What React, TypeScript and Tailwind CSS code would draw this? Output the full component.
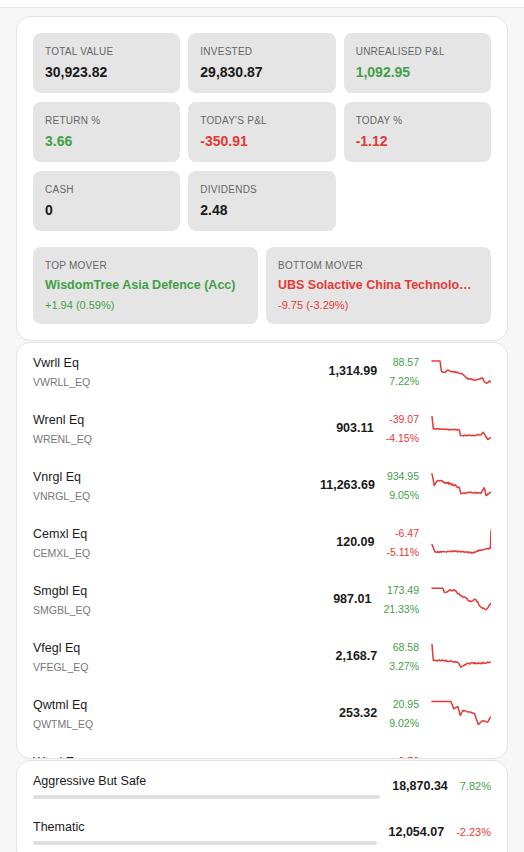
import React from 'react';

const GREEN = 'text-[#43a047]';
const RED = 'text-[#e53935]';

type Pt = [number, number, number?];

// small seeded random so the sparklines look the same on every render
function seeded(seed: number) {
  let s = seed;
  return () => {
    s = (s * 9301 + 49297) % 233280;
    return s / 233280;
  };
}

function buildPath(points: Pt[], seed: number) {
  const r = seeded(seed);
  const out: string[] = [];
  for (let i = 0; i < points.length - 1; i++) {
    const [x1, y1, j = 1.1] = points[i];
    const [x2, y2] = points[i + 1];
    const steps = Math.max(1, Math.round((x2 - x1) / 0.9));
    for (let k = 0; k < steps; k++) {
      const t = k / steps;
      const x = x1 + (x2 - x1) * t;
      const y = y1 + (y2 - y1) * t + (k === 0 ? 0 : (r() - 0.5) * j);
      out.push(`${out.length ? 'L' : 'M'}${x.toFixed(2)} ${y.toFixed(2)}`);
    }
  }
  const last = points[points.length - 1];
  out.push(`L${last[0]} ${last[1]}`);
  return out.join(' ');
}

function Sparkline({ points, seed, up }: { points: Pt[]; seed: number; up?: boolean }) {
  return (
    <svg width="60" height="28" viewBox="0 0 60 28" className="shrink-0">
      <path
        d={buildPath(points, seed)}
        fill="none"
        stroke={up ? '#43a047' : '#e53935'}
        strokeWidth="1.5"
        strokeLinejoin="round"
        strokeLinecap="round"
      />
    </svg>
  );
}

const stats = [
  { label: 'Total Value', value: '30,923.82' },
  { label: 'Invested', value: '29,830.87' },
  { label: 'Unrealised P&L', value: '1,092.95', tone: GREEN },
  { label: 'Return %', value: '3.66', tone: GREEN },
  { label: "Today's P&L", value: '-350.91', tone: RED },
  { label: 'Today %', value: '-1.12', tone: RED },
  { label: 'Cash', value: '0' },
  { label: 'Dividends', value: '2.48' },
];

const holdings: {
  name: string;
  ticker: string;
  value: string;
  change: string;
  pct: string;
  up: boolean;
  spark: Pt[];
  sparkUp?: boolean;
}[] = [
  {
    name: 'Vwrll Eq', ticker: 'VWRLL_EQ', value: '1,314.99', change: '88.57', pct: '7.22%', up: true,
    spark: [[1, 3, 0], [9, 3, 0.2], [10.5, 13.5], [13, 14.5], [16.7, 12], [20, 13.7], [23, 13.7], [28, 15], [31.7, 16], [36.7, 21], [40, 21], [43.3, 22], [48.3, 21], [51.7, 19.7], [53.3, 23.7], [55.7, 25.3], [58.3, 23], [60, 24]],
  },
  {
    name: 'Wrenl Eq', ticker: 'WRENL_EQ', value: '903.11', change: '-39.07', pct: '-4.15%', up: false,
    spark: [[1, 1.5, 0], [2.3, 13.8], [14, 14.4], [26.7, 14.8], [28.5, 15], [29.3, 20.5], [40, 20.5], [50, 19.8], [52.3, 17.2], [56.7, 24.5], [59.3, 22.8]],
  },
  {
    name: 'Vnrgl Eq', ticker: 'VNRGL_EQ', value: '11,263.69', change: '934.95', pct: '9.05%', up: true,
    spark: [[1, 1.8, 0], [3.3, 13.5], [6.7, 8.5, 2], [13.3, 10.2, 2], [20, 11.8, 2], [23.3, 13.5, 2], [28.3, 15.2], [30, 21.8], [40, 20.2, 1.6], [50, 21.2], [53.3, 15.8], [55, 23.5], [59.3, 20.2]],
  },
  {
    name: 'Cemxl Eq', ticker: 'CEMXL_EQ', value: '120.09', change: '-6.47', pct: '-5.11%', up: false,
    spark: [[1, 15.5, 0], [4, 23], [23, 22.2], [41.7, 23.8], [51.7, 20.5], [59.3, 19.2, 0], [60, 1.5]],
  },
  {
    name: 'Smgbl Eq', ticker: 'SMGBL_EQ', value: '987.01', change: '173.49', pct: '21.33%', up: true,
    spark: [[1, 2.2, 0], [11.7, 2.2], [13.3, 6.2, 1.6], [23.3, 3.5, 1.6], [26.7, 7.8, 1.6], [33.3, 11.2, 1.6], [38.3, 15.2, 1.6], [45, 13.8, 1.6], [50, 21.2], [55, 23.8], [60, 17.2]],
  },
  {
    name: 'Vfegl Eq', ticker: 'VFEGL_EQ', value: '2,168.7', change: '68.58', pct: '3.27%', up: true,
    spark: [[1, 1.5, 0], [2.3, 17.5, 1.4], [13, 17.5, 1.4], [26.7, 19.2], [30, 24.2], [36.7, 20.2, 1.4], [50, 20.2, 1.4], [59.3, 19.2]],
  },
  {
    name: 'Qwtml Eq', ticker: 'QWTML_EQ', value: '253.32', change: '20.95', pct: '9.02%', up: true,
    spark: [[1, 1.5, 0], [20, 1.5, 0], [22.7, 8.8, 0.4], [26.7, 6.5, 0.4], [29.3, 15.5, 0.4], [31.7, 10.5, 0.6], [43.3, 13.2, 0.4], [47.3, 24.5, 0.4], [51.7, 20.5, 0.4], [56.7, 22.2, 0.4], [59.3, 17.2]],
  },
  {
    name: 'Wtrgl Eq', ticker: 'WTRGL_EQ', value: '1,046.17', change: '-0.72', pct: '-0.07%', up: false, sparkUp: true,
    spark: [[1, 20, 0], [8, 14], [12, 2.5], [18, 3], [25, 9], [34, 8], [42, 12], [50, 10], [59, 6]],
  },
];

const buckets = [
  { name: 'Aggressive But Safe', value: '18,870.34', pct: '7.82%', up: true },
  { name: 'Thematic', value: '12,054.07', pct: '-2.23%', up: false },
];

export default function App() {
  return (
    <div className="min-h-screen bg-[#f7f7f7] font-['Liberation_Sans',Arial,sans-serif] text-[#1a1a1a]">
      <div className="h-2 border-b border-[#e5e5e5] bg-white" />

      <div className="flex flex-col gap-px px-4 pt-2">
        {/* summary */}
        <div className="rounded-[14px] border border-[#e3e3e3] bg-white p-4">
          <div className="grid grid-cols-3 gap-x-2 gap-y-[9px]">
            {stats.map((s) => (
              <div key={s.label} className="h-[60px] rounded-[8px] bg-[#e5e5e5] p-3">
                <div className="text-[10px] leading-[13px] tracking-[0.25px] text-[#666] uppercase">{s.label}</div>
                <div className={`mt-[6px] text-[14px] leading-[17px] font-bold ${s.tone ?? 'text-[#1a1a1a]'}`}>{s.value}</div>
              </div>
            ))}
          </div>

          <div className="mt-4 grid grid-cols-2 gap-2">
            <div className="min-w-0 rounded-[8px] bg-[#e5e5e5] p-3">
              <div className="text-[10px] leading-[13px] tracking-[0.25px] text-[#666] uppercase">Top Mover</div>
              <div className={`mt-[5px] truncate text-[12.5px] leading-[16px] font-bold ${GREEN}`}>WisdomTree Asia Defence (Acc)</div>
              <div className={`mt-[5px] text-[11px] leading-[14px] ${GREEN}`}>+1.94 (0.59%)</div>
            </div>
            <div className="min-w-0 rounded-[8px] bg-[#e5e5e5] p-3">
              <div className="text-[10px] leading-[13px] tracking-[0.25px] text-[#666] uppercase">Bottom Mover</div>
              <div className={`mt-[5px] truncate text-[12.5px] leading-[16px] font-bold ${RED}`}>UBS Solactive China Technology (Dist)</div>
              <div className={`mt-[5px] text-[11px] leading-[14px] ${RED}`}>-9.75 (-3.29%)</div>
            </div>
          </div>
        </div>

        {/* holdings */}
        <div className="h-[417px] overflow-hidden rounded-[14px] border border-[#e3e3e3] bg-white px-4">
          {holdings.map((h, i) => (
            <div key={h.ticker} className="flex h-[57px] items-center gap-3">
              <div className="min-w-0 flex-1">
                <div className="text-[12.5px] leading-[16px] text-[#1a1a1a]">{h.name}</div>
                <div className="mt-[4px] text-[10.5px] leading-[14px] text-[#777]">{h.ticker}</div>
              </div>
              <div className="text-[12.5px] font-bold text-[#1a1a1a]">{h.value}</div>
              <div className={`flex flex-col items-end gap-[5px] text-[10.5px] leading-[14px] ${h.up ? GREEN : RED}`}>
                <span>{h.change}</span>
                <span>{h.pct}</span>
              </div>
              <Sparkline points={h.spark} seed={i * 37 + 11} up={h.sparkUp} />
            </div>
          ))}
        </div>

        {/* buckets */}
        <div className="rounded-[14px] border border-[#e3e3e3] bg-white px-4 pt-[2px] pb-2">
          {buckets.map((b) => (
            <div key={b.name} className="flex items-center gap-3 py-[10px]">
              <div className="min-w-0 flex-1">
                <div className="text-[12.5px] leading-[16px] text-[#1a1a1a]">{b.name}</div>
                <div className="mt-[6px] h-[4px] rounded-full bg-[#dedede]" />
              </div>
              <div className="text-[12.5px] font-bold text-[#1a1a1a]">{b.value}</div>
              <div className={`text-[11px] ${b.up ? GREEN : RED}`}>{b.pct}</div>
            </div>
          ))}
        </div>
      </div>
    </div>
  );
}
